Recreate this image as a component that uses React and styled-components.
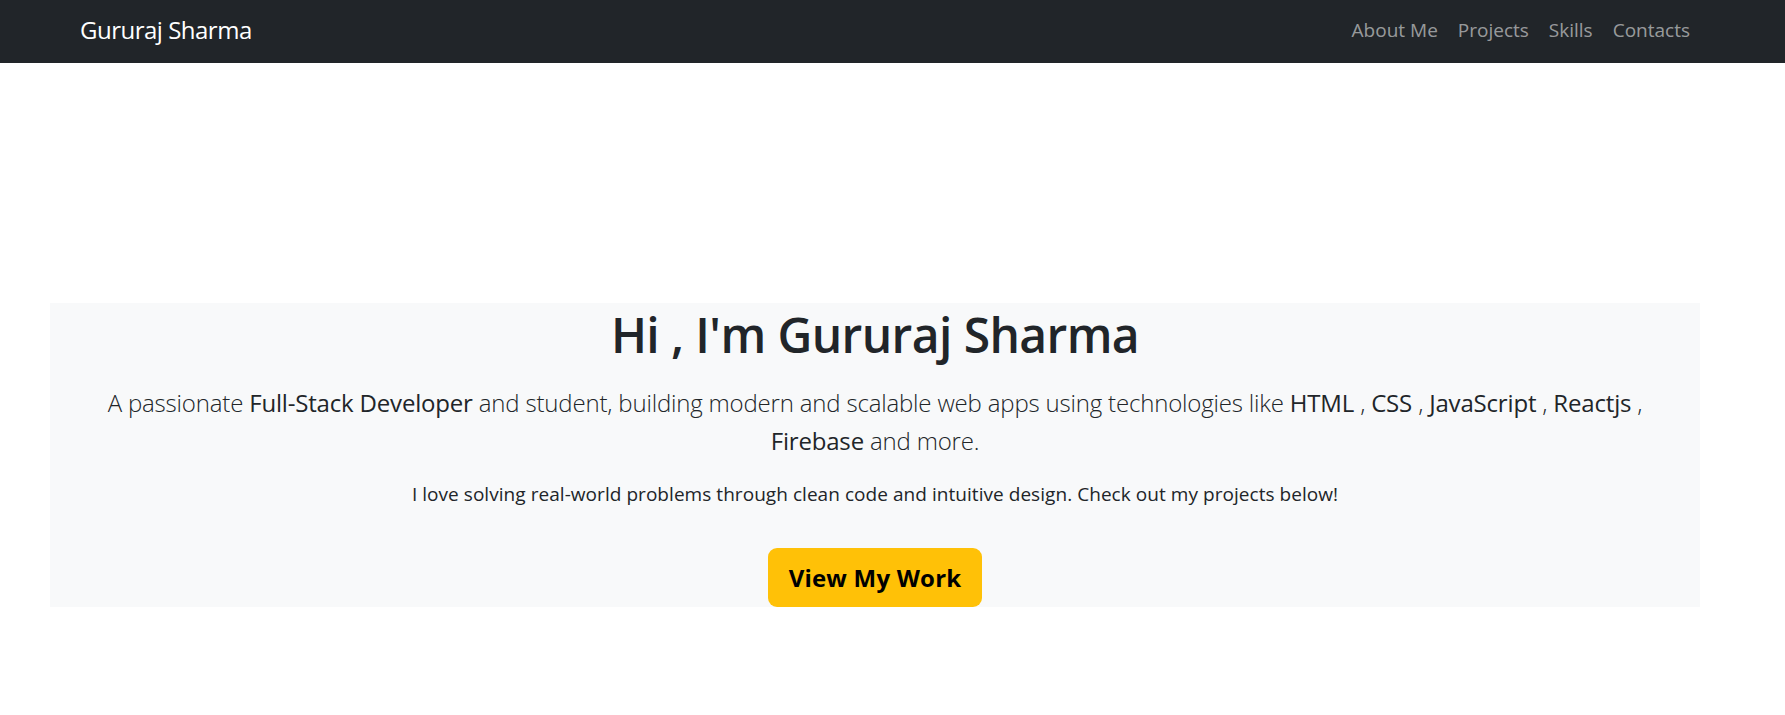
import React from "react";
import styled, { createGlobalStyle } from "styled-components";

const GlobalStyle = createGlobalStyle`
  html, body {
    margin: 0;
    padding: 0;
    background: #ffffff;
    font-family: "Open Sans", "Noto Sans", "Liberation Sans", sans-serif;
    color: #212529;
  }
  * { box-sizing: border-box; }
`;

const NavBar = styled.nav`
  height: 63px;
  background: #212529;
  display: flex;
  align-items: center;
  justify-content: space-between;
  padding: 0 85px 0 80px;
`;

const Brand = styled.a`
  color: #ffffff;
  font-size: 24px;
  letter-spacing: -0.5px;
  line-height: 36px;
  text-decoration: none;
  padding-bottom: 3px;
`;

const NavList = styled.ul`
  list-style: none;
  margin: 0;
  padding: 0;
  display: flex;
`;

const NavLink = styled.a`
  display: block;
  padding: 0 10px 4px;
  font-size: 19px;
  line-height: 28px;
  letter-spacing: 0;
  color: rgba(255, 255, 255, 0.55);
  text-decoration: none;
`;

const Main = styled.main`
  padding: 240px 85px 0 50px;
`;

const Hero = styled.section`
  background: #f8f9fa;
  text-align: center;
  padding: 3px 45px 0;
  display: flex;
  flex-direction: column;
  align-items: center;
`;

const Title = styled.h1`
  margin: 0;
  font-size: 48px;
  line-height: 1.2;
  font-weight: 600;
  letter-spacing: -0.6px;
  color: #212529;
`;

const Lead = styled.p`
  margin: 20px 0 0;
  font-size: 24px;
  line-height: 38.5px;
  font-weight: 300;
  letter-spacing: -0.18px;
  color: #212529;
`;

const Strong = styled.span`
  font-weight: 400;
  color: #212529;
`;

const Note = styled.p`
  margin: 19px 0 0;
  font-size: 19px;
  line-height: 28.5px;
  letter-spacing: 0.05px;
  color: #212529;
`;

const Button = styled.a`
  margin-top: 40px;
  display: inline-flex;
  align-items: center;
  justify-content: center;
  height: 59px;
  padding: 0 21px;
  background: #ffc107;
  color: #000000;
  border-radius: 9px;
  font-size: 24px;
  font-weight: 700;
  letter-spacing: 0.2px;
  text-decoration: none;
`;

const links = ["About Me", "Projects", "Skills", "Contacts"];
const techs = ["HTML", "CSS", "JavaScript", "Reactjs"];

export default function App() {
  return (
    <>
      <GlobalStyle />
      <NavBar>
        <Brand href="#">Gururaj Sharma</Brand>
        <NavList>
          {links.map((l) => (
            <li key={l}>
              <NavLink href="#">{l}</NavLink>
            </li>
          ))}
        </NavList>
      </NavBar>
      <Main>
        <Hero>
          <Title>Hi , I'm Gururaj Sharma</Title>
          <Lead>
            A passionate <Strong>Full-Stack Developer</Strong> and student, building
            modern and scalable web apps using technologies like{" "}
            {techs.map((t) => (
              <React.Fragment key={t}>
                <Strong>{t}</Strong> ,{" "}
              </React.Fragment>
            ))}
            <Strong>Firebase</Strong> and more.
          </Lead>
          <Note>
            I love solving real-world problems through clean code and intuitive
            design. Check out my projects below!
          </Note>
          <Button href="#">View My Work</Button>
        </Hero>
      </Main>
    </>
  );
}
